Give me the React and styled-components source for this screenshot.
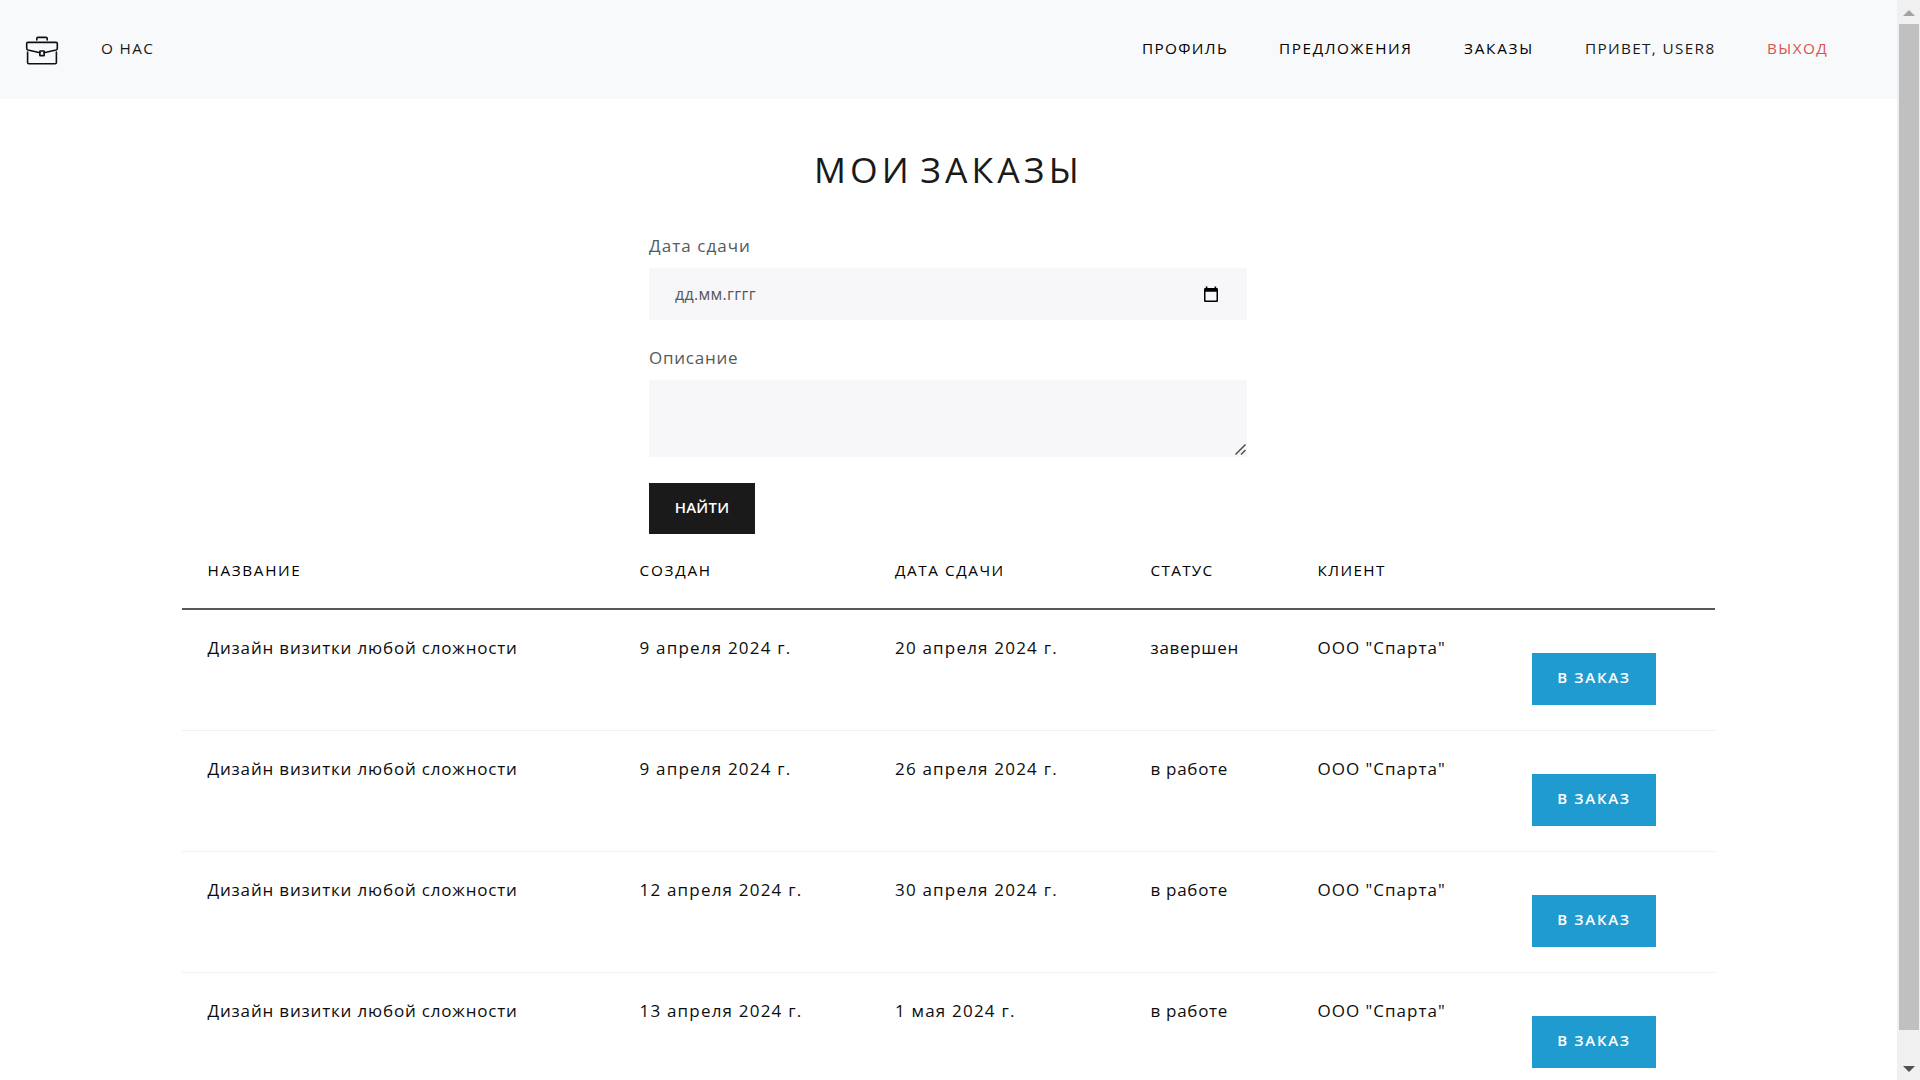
import styled, { createGlobalStyle } from "styled-components";

const GlobalStyle = createGlobalStyle`
  * {
    box-sizing: border-box;
  }
  body {
    margin: 0;
    background: #fff;
    color: #0d0d0d;
    font-family: "Open Sans", "Noto Sans", sans-serif;
    font-size: 17px;
    line-height: 26px;
  }
`;

const Window = styled.div`
  display: flex;
  height: 100vh;
  overflow: hidden;
`;

const Page = styled.div`
  flex: 1;
  height: 100%;
  overflow: hidden;
`;

const Navbar = styled.nav`
  display: flex;
  align-items: center;
  height: 99px;
  padding: 0 68px 0 25px;
  background: #f8f9fb;
`;

const Brand = styled.a`
  display: flex;
  margin-right: 42px;
  padding-top: 2px;
`;

const NavLinks = styled.div`
  display: flex;
  flex: 1;
  padding-bottom: 4px;
`;

const NavGap = styled.div`
  flex: 1;
`;

const NavLink = styled.a`
  width: ${(props) => props.$width}px;
  color: ${(props) => props.color || "#000"};
  font-size: 15.3px;
  letter-spacing: ${(props) => props.$spacing}px;
  text-transform: uppercase;
  white-space: nowrap;
`;

const Title = styled.h1`
  margin: 49px 0 0;
  color: #1a1a1a;
  font-size: 35.5px;
  font-weight: 400;
  line-height: 42px;
  letter-spacing: 4.1px;
  word-spacing: -6px;
  text-align: center;
  text-transform: uppercase;
`;

const Form = styled.form`
  display: flex;
  flex-direction: column;
  align-items: flex-start;
  width: 598px;
  margin: 43px 0 0 649px;
`;

const Label = styled.label`
  margin-bottom: 9px;
  color: #55595c;
  letter-spacing: ${(props) => props.$spacing}px;
`;

const DateField = styled.div`
  display: flex;
  align-items: center;
  justify-content: space-between;
  width: 100%;
  height: 52px;
  margin-bottom: 25px;
  padding: 0 26px;
  background: #f7f7f9;
  color: #55595c;
  font-size: 16px;
  letter-spacing: 0.3px;
`;

const TextAreaWrap = styled.div`
  position: relative;
  width: 100%;
  height: 77px;
  margin-bottom: 26px;
`;

const TextArea = styled.textarea`
  display: block;
  width: 100%;
  height: 100%;
  padding: 12px 26px;
  border: 0;
  border-radius: 0;
  outline: none;
  background: #f7f7f9;
  font: inherit;
  resize: none;
`;

const ResizeGrip = styled.svg`
  position: absolute;
  right: 0;
  bottom: 1px;
  width: 13px;
  height: 13px;
  stroke: #4d4d4d;
  stroke-width: 1.5;
  pointer-events: none;
`;

const Button = styled.button`
  width: ${(props) => props.$width}px;
  height: ${(props) => props.$height}px;
  padding: 0 0 4px;
  border: 0;
  background: ${(props) => props.color};
  color: #fff;
  font-family: inherit;
  font-size: 15px;
  font-weight: 600;
  line-height: 22px;
  letter-spacing: ${(props) => props.$spacing}px;
  text-transform: uppercase;
`;

const Table = styled.table`
  width: 1533px;
  margin: 0 0 0 182px;
  border-collapse: separate;
  border-spacing: 0;
  table-layout: fixed;
`;

const Th = styled.th`
  width: ${(props) => props.$width}px;
  height: 76px;
  padding: 23px 0 0 25.5px;
  border-bottom: 2px solid #55595c;
  color: #000;
  font-size: 15.3px;
  font-weight: 400;
  letter-spacing: ${(props) => props.$spacing}px;
  text-align: left;
  text-transform: uppercase;
  vertical-align: top;
  white-space: nowrap;
`;

const Td = styled.td`
  height: 121px;
  padding: 25px 0 0 25.5px;
  border-bottom: 1px solid #f0f1f2;
  letter-spacing: ${(props) => props.$spacing || 1.2}px;
  vertical-align: top;
  white-space: nowrap;
`;

const Action = styled.div`
  padding: 18px 0 0 0.5px;
`;

const Scrollbar = styled.div`
  display: flex;
  flex-direction: column;
  align-items: center;
  justify-content: space-between;
  width: 23px;
  height: 100%;
  padding: 10px 0 8px;
  background: #f0f0f0;
`;

const Thumb = styled.div`
  flex: 1;
  width: 20px;
  margin: 8px 0 36px;
  background: #c0c0c0;
`;

const Arrow = styled.svg`
  display: block;
  width: 12px;
  height: 6px;
`;

const columns = [
  { title: "Название", width: 432, spacing: 1.65 },
  { title: "Создан", width: 255.5, spacing: 1.75 },
  { title: "Дата сдачи", width: 255.5, spacing: 1.55 },
  { title: "Статус", width: 167, spacing: 1.3 },
  { title: "Клиент", width: 214, spacing: 1.4 },
  { title: "", width: 209 },
];

const orders = [
  { created: "9 апреля 2024 г.", due: "20 апреля 2024 г.", status: "завершен" },
  { created: "9 апреля 2024 г.", due: "26 апреля 2024 г.", status: "в работе" },
  { created: "12 апреля 2024 г.", due: "30 апреля 2024 г.", status: "в работе" },
  { created: "13 апреля 2024 г.", due: "1 мая 2024 г.", status: "в работе" },
];

const BriefcaseIcon = () => (
  <svg width="34" height="30" viewBox="0 0 34 30" fill="none" stroke="#111" strokeWidth="1.6" strokeLinecap="round" strokeLinejoin="round">
    <path d="M11.8 4V2.6Q11.8 1.4 13 1.4H21Q22.2 1.4 22.2 2.6V4" />
    <path d="M15 16.8L3 14Q1.7 13.6 1.7 12.2V7.6Q1.7 6.4 2.9 6.4H31.1Q32.3 6.4 32.3 7.6V12.2Q32.3 13.6 31 14L19 16.8" />
    <path d="M2.6 16V26.6Q2.6 27.8 3.8 27.8H30.2Q31.4 27.8 31.4 26.6V16" />
    <rect x="14.8" y="15" width="4.4" height="4.6" rx="0.4" />
  </svg>
);

const CalendarIcon = () => (
  <svg width="20" height="16" viewBox="0 -0.5 20 16">
    <path fill="#000" d="M4.8 0h1.6v1.6h7.2V0h1.6v1.6h.6q1.2 0 1.2 1.2v11.5q0 1.2-1.2 1.2H4.2q-1.2 0-1.2-1.2V2.8q0-1.2 1.2-1.2h.6zM4.5 5.2v8.9h11V5.2z" />
  </svg>
);

const App = () => {
  return (
    <>
      <GlobalStyle />
      <Window>
        <Page>
          <Navbar>
            <Brand>
              <BriefcaseIcon />
            </Brand>
            <NavLinks>
              <NavLink $spacing={1.35} color="#1a1a1a">О нас</NavLink>
              <NavGap />
              <NavLink $width={137} $spacing={1.35}>Профиль</NavLink>
              <NavLink $width={185} $spacing={1.6}>Предложения</NavLink>
              <NavLink $width={121} $spacing={1.75}>Заказы</NavLink>
              <NavLink $width={182} $spacing={1.35} color="#1a1a1a">Привет, user8</NavLink>
              <NavLink $width={62} $spacing={1.4} color="#d9534f">Выход</NavLink>
            </NavLinks>
          </Navbar>

          <Title>Мои заказы</Title>

          <Form>
            <Label $spacing={1.05}>Дата сдачи</Label>
            <DateField>
              дд.мм.гггг
              <CalendarIcon />
            </DateField>
            <Label $spacing={0.75}>Описание</Label>
            <TextAreaWrap>
              <TextArea />
              <ResizeGrip viewBox="0 0 13 13">
                <path d="M1.5 11.5L11.5 1.5M7 11.5L11.5 7" />
              </ResizeGrip>
            </TextAreaWrap>
            <Button type="button" color="#1a1a1a" $width={106} $height={51} $spacing={0.25}>
              Найти
            </Button>
          </Form>

          <Table>
            <thead>
              <tr>
                {columns.map((column) => (
                  <Th key={column.title} $width={column.width} $spacing={column.spacing}>
                    {column.title}
                  </Th>
                ))}
              </tr>
            </thead>
            <tbody>
              {orders.map((order, index) => (
                <tr key={index}>
                  <Td $spacing={0.82}>Дизайн визитки любой сложности</Td>
                  <Td>{order.created}</Td>
                  <Td>{order.due}</Td>
                  <Td $spacing={0.7}>{order.status}</Td>
                  <Td $spacing={1}>ООО "Спарта"</Td>
                  <Td>
                    <Action>
                      <Button type="button" color="#1f9bcf" $width={124} $height={52} $spacing={1.7}>
                        В заказ
                      </Button>
                    </Action>
                  </Td>
                </tr>
              ))}
            </tbody>
          </Table>
        </Page>

        <Scrollbar>
          <Arrow viewBox="0 0 12 6">
            <path d="M0 6L6 0L12 6Z" fill="#a3a3a3" />
          </Arrow>
          <Thumb />
          <Arrow viewBox="0 0 12 6">
            <path d="M0 0L6 6L12 0Z" fill="#505050" />
          </Arrow>
        </Scrollbar>
      </Window>
    </>
  );
};

export default App;
